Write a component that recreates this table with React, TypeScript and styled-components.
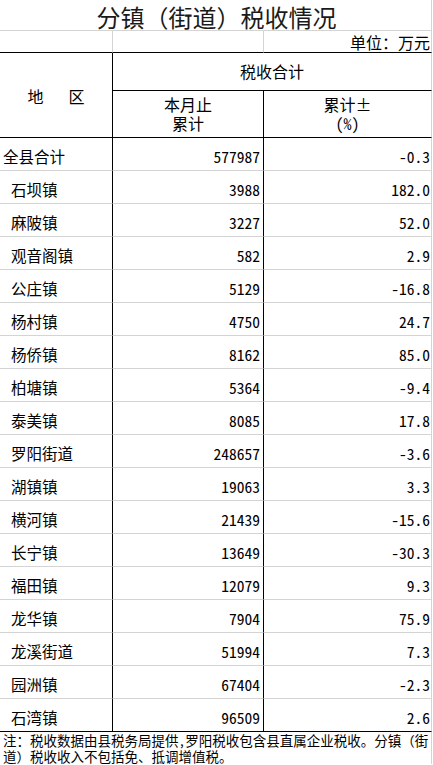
import React from "react";
import styled, { createGlobalStyle } from "styled-components";

const Global = createGlobalStyle`
  html, body { margin: 0; padding: 0; background: #fff; }
  body {
    font-family: "Noto Sans Mono CJK SC", "Noto Sans CJK SC", "Liberation Mono", monospace;
    color: #000;
  }
  * { box-sizing: border-box; }
`;

const GRID = "#d4d4d4";
const INK = "#000";

const Sheet = styled.div`
  display: grid;
  grid-template-columns: 113px 151px 168px;
  grid-template-rows: 31px 22px 38px 47px repeat(18, 33px) auto;
  width: 432px;
`;

const Title = styled.div`
  grid-column: 1 / 4;
  display: flex;
  align-items: center;
  justify-content: center;
  padding-top: 4px;
  padding-left: 2px;
  font-family: "Noto Sans CJK SC", sans-serif;
  font-size: 24px;
  line-height: 1;
  color: #1a1a1a;
  border-right: 1px solid ${GRID};
  border-bottom: 1px solid ${GRID};
`;

const UnitCell = styled.div`
  display: flex;
  align-items: center;
  justify-content: flex-end;
  padding-right: 1px;
  padding-top: 1px;
  font-size: 16px;
  border-right: 1px solid ${GRID};
  border-bottom: 1px solid ${INK};
`;

const HeadCell = styled.div<{ $rowSpan?: number; $colSpan?: number; $right?: "ink" | "grid" }>`
  grid-row: span ${(p) => p.$rowSpan ?? 1};
  grid-column: span ${(p) => p.$colSpan ?? 1};
  display: flex;
  flex-direction: column;
  align-items: center;
  justify-content: center;
  font-family: "Noto Sans CJK SC", sans-serif;
  font-size: 16px;
  line-height: 19px;
  text-align: center;
  border-right: 1px solid ${(p) => (p.$right === "grid" ? GRID : INK)};
  border-bottom: 1px solid ${INK};
`;

const Region = styled.div`
  display: flex;
  gap: 25px;
  padding-top: 2px;
`;

const Paren = styled.span`
  font-family: "Noto Sans Mono CJK SC", "Liberation Mono", monospace;
`;

const NameCell = styled.div<{ $indent: boolean }>`
  display: flex;
  align-items: center;
  padding-top: 3px;
  padding-left: ${(p) => (p.$indent ? 11 : 3)}px;
  font-family: "Noto Sans CJK SC", sans-serif;
  font-size: 15.5px;
  border-right: 1px solid ${INK};
  border-bottom: 1px solid ${GRID};
`;

const NumCell = styled.div<{ $pad: number; $edge: "ink" | "grid" }>`
  display: flex;
  align-items: center;
  justify-content: flex-end;
  padding-top: 3px;
  padding-right: ${(p) => p.$pad}px;
  font-size: 15.5px;
  border-right: 1px solid ${(p) => (p.$edge === "ink" ? INK : GRID)};
  border-bottom: 1px solid ${GRID};
`;

const Note = styled.div`
  grid-column: 1 / 4;
  margin-top: -1px;
  border-top: 1px solid ${INK};
  border-right: 1px solid ${GRID};
  padding: 0 2px 0 3px;
  font-size: 13.5px;
  line-height: 16px;
`;

const rows: [string, string, string][] = [
  ["全县合计", "577987", "-0.3"],
  ["石坝镇", "3988", "182.0"],
  ["麻陂镇", "3227", "52.0"],
  ["观音阁镇", "582", "2.9"],
  ["公庄镇", "5129", "-16.8"],
  ["杨村镇", "4750", "24.7"],
  ["杨侨镇", "8162", "85.0"],
  ["柏塘镇", "5364", "-9.4"],
  ["泰美镇", "8085", "17.8"],
  ["罗阳街道", "248657", "-3.6"],
  ["湖镇镇", "19063", "3.3"],
  ["横河镇", "21439", "-15.6"],
  ["长宁镇", "13649", "-30.3"],
  ["福田镇", "12079", "9.3"],
  ["龙华镇", "7904", "75.9"],
  ["龙溪街道", "51994", "7.3"],
  ["园洲镇", "67404", "-2.3"],
  ["石湾镇", "96509", "2.6"],
];

export default function App() {
  return (
    <>
      <Global />
      <Sheet>
        <Title>分镇（街道）税收情况</Title>
        <UnitCell />
        <UnitCell />
        <UnitCell>单位：万元</UnitCell>

        <HeadCell $rowSpan={2}>
          <Region>
            <span>地</span>
            <span>区</span>
          </Region>
        </HeadCell>
        <HeadCell $colSpan={2} $right="grid">税收合计</HeadCell>
        <HeadCell>
          <span>本月止</span>
          <span>累计</span>
        </HeadCell>
        <HeadCell $right="grid">
          <span>累计±</span>
          <Paren>(%)</Paren>
        </HeadCell>

        {rows.map(([name, total, pct], i) => (
          <React.Fragment key={name}>
            <NameCell $indent={i > 0}>{name}</NameCell>
            <NumCell $pad={3} $edge="ink">{total}</NumCell>
            <NumCell $pad={1} $edge="grid">{pct}</NumCell>
          </React.Fragment>
        ))}

        <Note>
          注：税收数据由县税务局提供,罗阳税收包含县直属企业税收。分镇（街道）税收收入不包括免、抵调增值税。
        </Note>
      </Sheet>
    </>
  );
}
